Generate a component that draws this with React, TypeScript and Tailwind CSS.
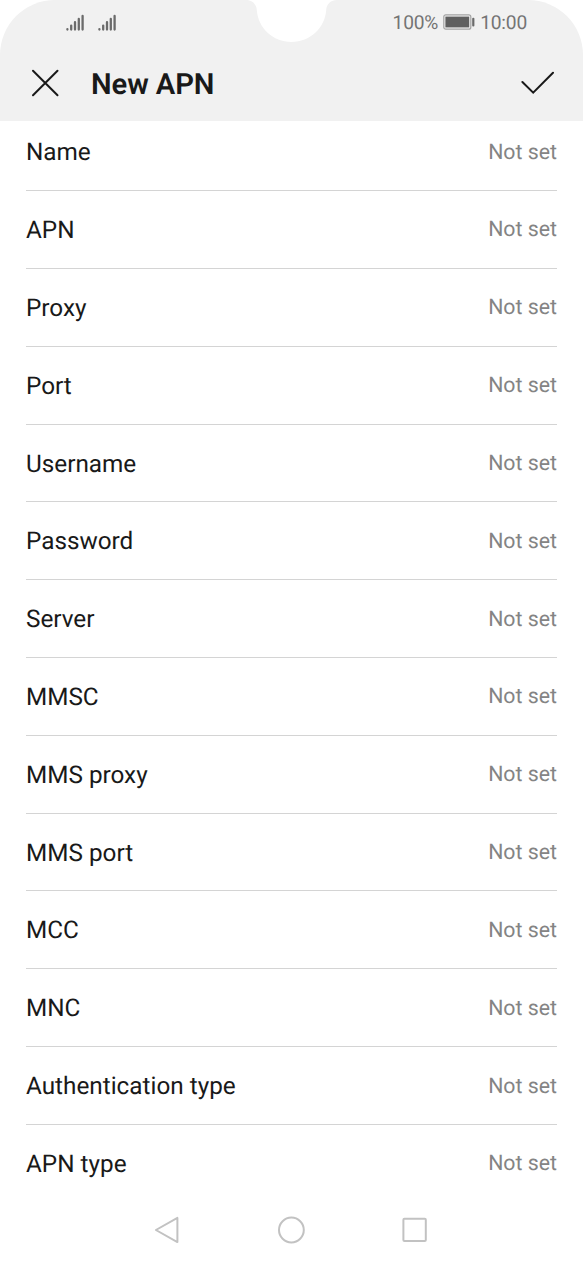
import React from "react";

const fields = [
    { label: "Name", value: "Not set" },
    { label: "APN", value: "Not set" },
    { label: "Proxy", value: "Not set" },
    { label: "Port", value: "Not set" },
    { label: "Username", value: "Not set" },
    { label: "Password", value: "Not set" },
    { label: "Server", value: "Not set" },
    { label: "MMSC", value: "Not set" },
    { label: "MMS proxy", value: "Not set" },
    { label: "MMS port", value: "Not set" },
    { label: "MCC", value: "Not set" },
    { label: "MNC", value: "Not set" },
    { label: "Authentication type", value: "Not set" },
    { label: "APN type", value: "Not set" },
];

function SignalIcon() {
    return (
        <svg width="18" height="17" viewBox="0 0 18 17" fill="none" stroke="#6b6b6b" strokeWidth="2.3" strokeLinecap="round">
            <path d="M1.4 15.2v.4M5.2 11.6v4M9 8.2v7.4M12.8 5v10.6M16.6 1.9v13.7" />
        </svg>
    );
}

function BatteryIcon() {
    return (
        <svg width="32" height="16" viewBox="0 0 32 16" fill="none">
            <rect x="0.8" y="0.8" width="27" height="14.4" rx="2" stroke="#a3a3a3" strokeWidth="1.2" />
            <rect x="2.4" y="2.6" width="23.8" height="10.8" fill="#5f5f5f" />
            <rect x="29.2" y="3.8" width="2.2" height="8.6" rx="1" fill="#6b6b6b" />
        </svg>
    );
}

function StatusBar() {
    return (
        <div className="flex h-[45px] items-center justify-between pr-[56px] pl-[66px]">
            <div className="flex gap-[14px]">
                <SignalIcon />
                <SignalIcon />
            </div>
            <div className="flex items-center text-[19.2px] leading-none tracking-[-0.2px] text-[#747474]">
                <span className="pt-px">100%</span>
                <span className="mr-[5px] ml-[5px]">
                    <BatteryIcon />
                </span>
                <span className="pt-px">10:00</span>
            </div>
        </div>
    );
}

export default function App() {
    return (
        <div className="flex h-[1264px] w-[583px] flex-col overflow-hidden bg-white font-['Roboto',sans-serif] [text-rendering:geometricPrecision]">
            <header className="relative h-[121.4px] shrink-0 rounded-t-[55px] bg-[#f1f1f1]">
                {/* Camera notch */}
                <svg className="absolute top-0 left-[246px]" width="92" height="43" viewBox="0 0 92 43">
                    <path d="M0 0C6 0 10.5 4 10.8 10C12 28 27 42 45.5 42S79 28 80.2 10C80.5 4 85 0 91 0Z" fill="#ffffff" />
                </svg>

                <StatusBar />

                <div className="flex h-[76px] items-center pr-[28px] pl-[31px]">
                    <button aria-label="Close">
                        <svg width="28" height="28" viewBox="0 0 28 28" fill="none" stroke="#191919" strokeWidth="2" strokeLinecap="round">
                            <path d="M2 1.7l24.5 24.5M26.5 1.7L2 26.2" />
                        </svg>
                    </button>
                    <h1 className="ml-[32px] flex-1 pt-[4px] text-[29.2px] leading-[44px] font-semibold tracking-[-0.1px] text-[#191919]">New APN</h1>
                    <button aria-label="Save">
                        <svg width="34" height="24" viewBox="0 0 34 24" fill="none" stroke="#191919" strokeWidth="2" strokeLinecap="round">
                            <path d="M1.4 11L12.2 21.6L32 1.8" />
                        </svg>
                    </button>
                </div>
            </header>

            <main className="flex-1 overflow-hidden px-[26px]">
                <ul className="-mt-[8.2px]">
                    {fields.map((field) => (
                        <li
                            key={field.label}
                            className="flex h-[77.83px] items-center justify-between border-b border-[#d4d4d4] last:border-transparent"
                        >
                            <span className="pt-[1.6px] text-[24.3px] text-[#191919]">{field.label}</span>
                            <span className="pt-[2px] text-[21.3px] text-[#848484]">{field.value}</span>
                        </li>
                    ))}
                </ul>
            </main>

            <nav className="flex h-[68px] shrink-0 items-center justify-between pr-[155px] pl-[154px]">
                <svg width="26" height="28" viewBox="0 0 26 28" fill="none" stroke="#c2c2c2" strokeWidth="2" strokeLinejoin="round">
                    <path d="M1.9 14L23.4 1.9V26.1Z" />
                </svg>
                <svg width="28" height="28" viewBox="0 0 28 28" fill="none" stroke="#c2c2c2" strokeWidth="2">
                    <circle cx="14.4" cy="14" r="12.4" />
                </svg>
                <svg width="26" height="26" viewBox="0 0 26 26" fill="none" stroke="#c2c2c2" strokeWidth="2">
                    <rect x="1.4" y="1.7" width="22.4" height="22.4" rx="1" />
                </svg>
            </nav>
        </div>
    );
}
